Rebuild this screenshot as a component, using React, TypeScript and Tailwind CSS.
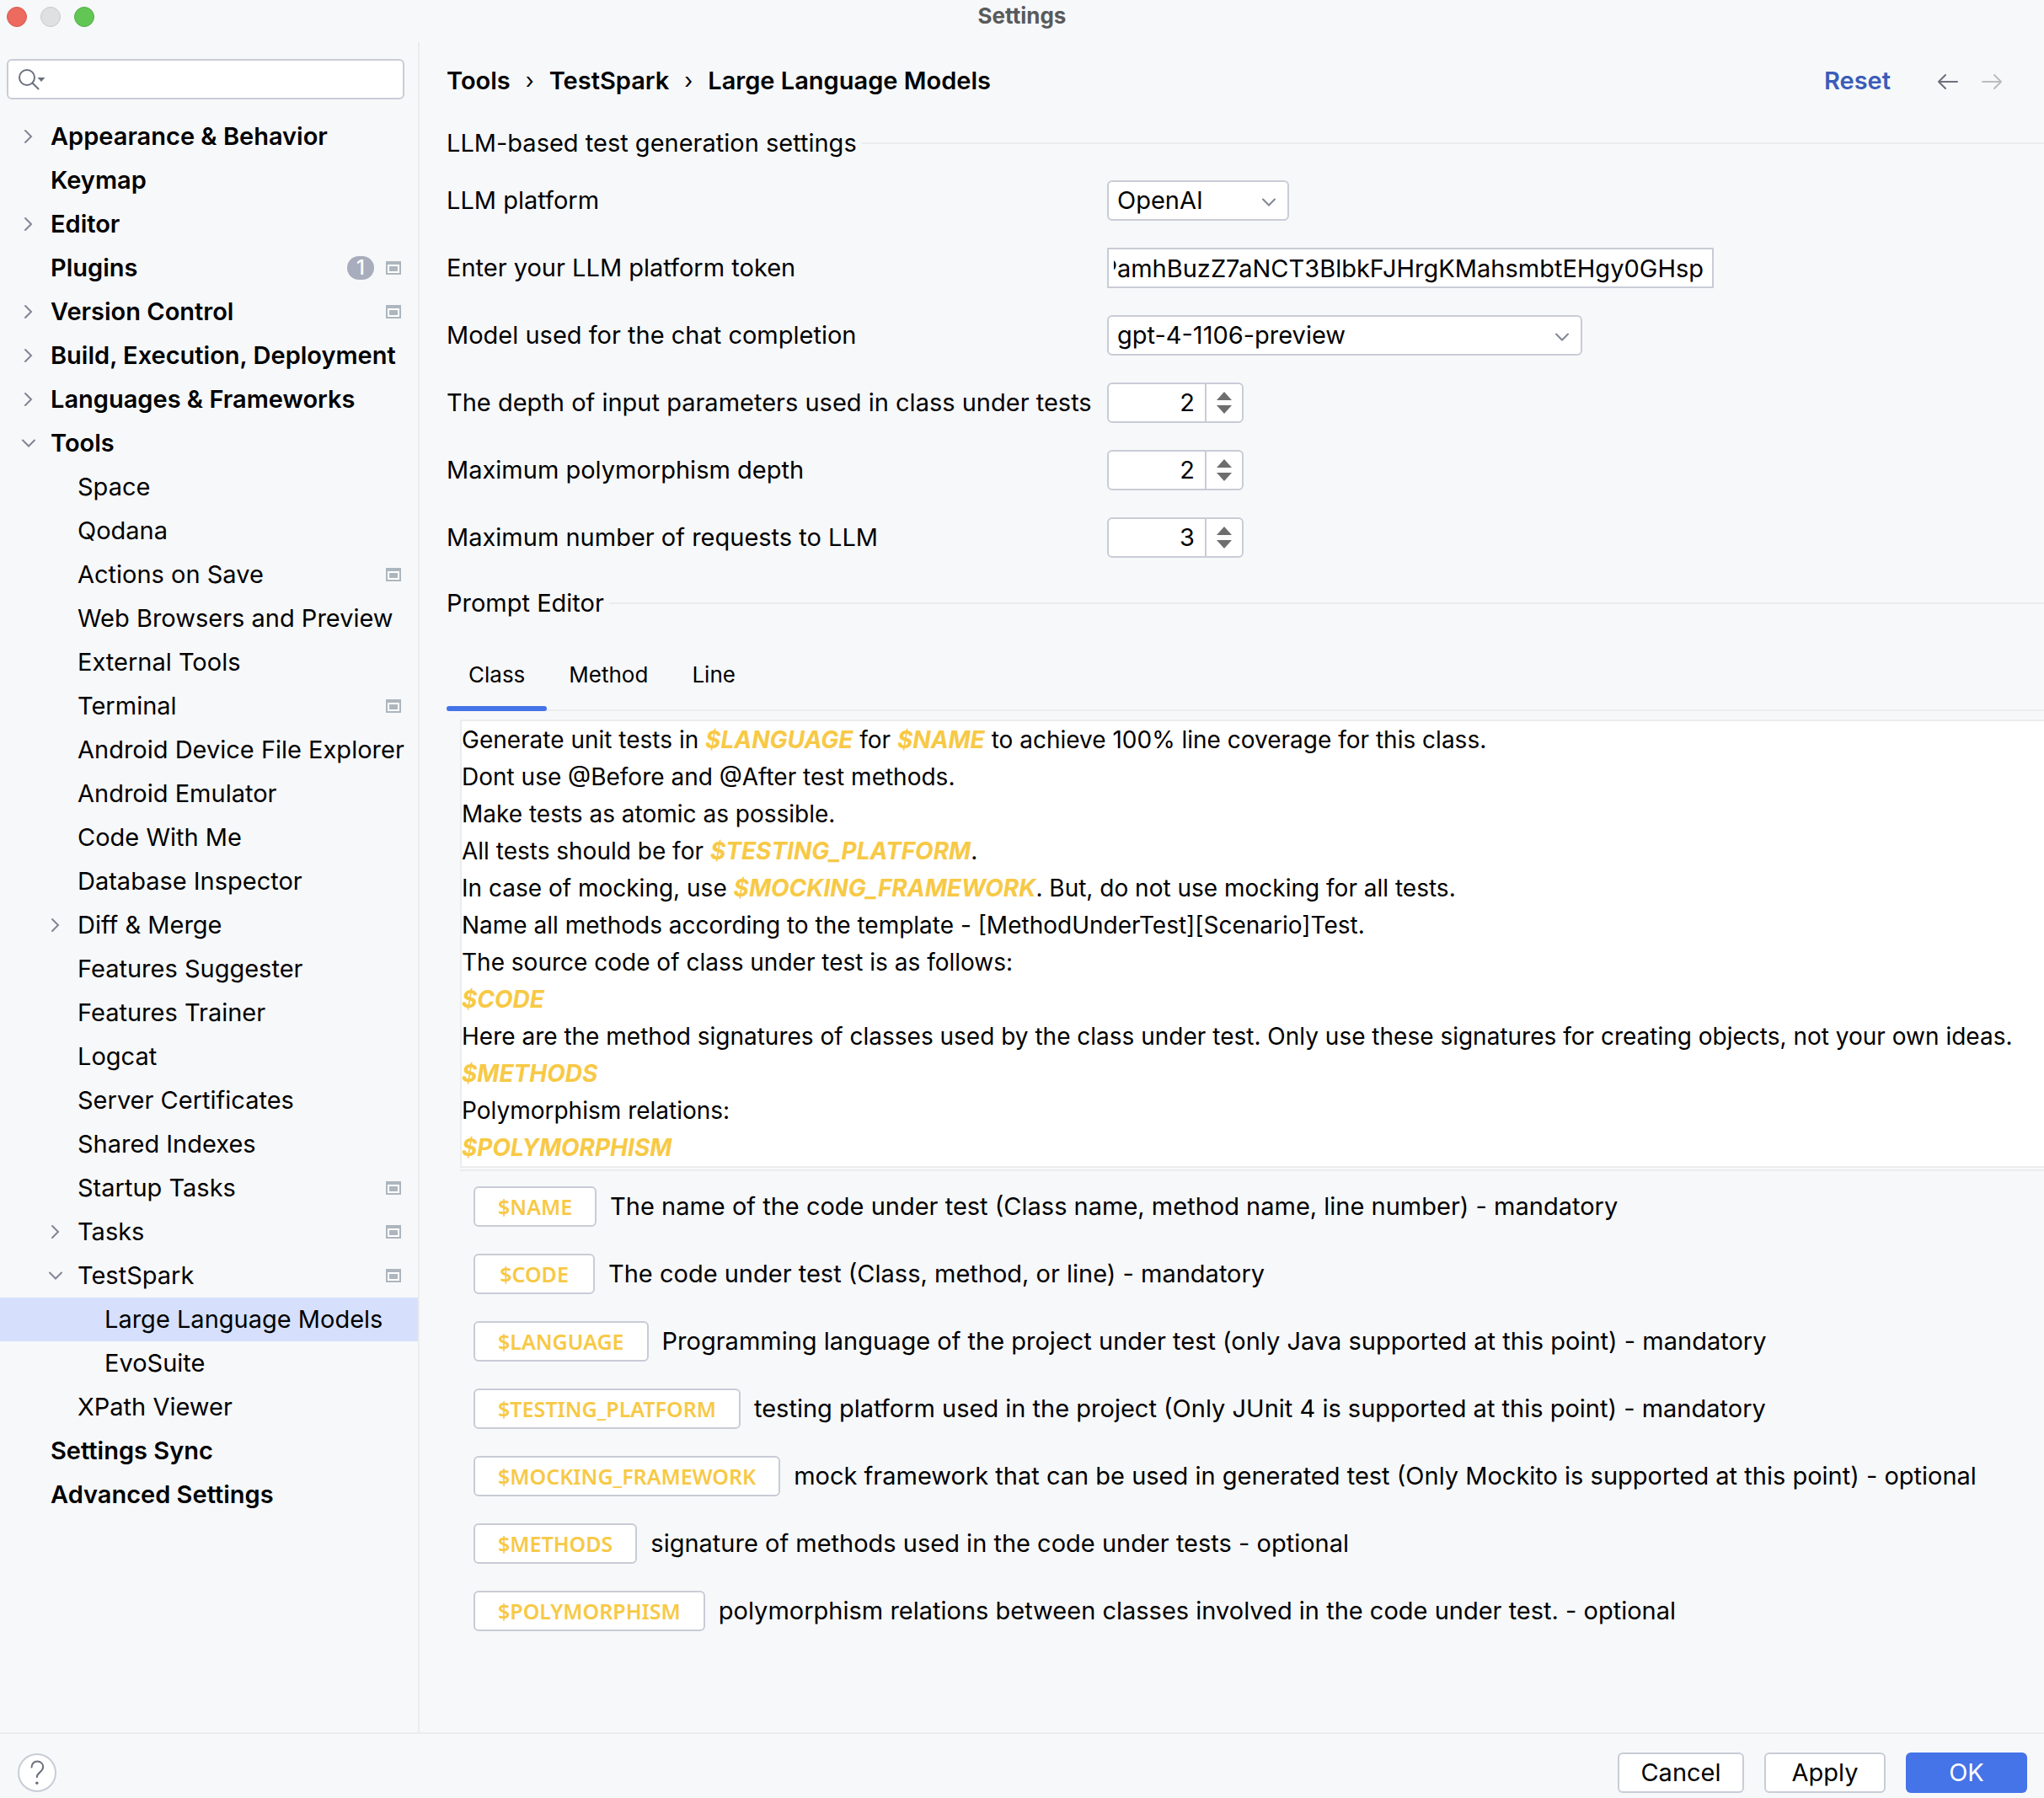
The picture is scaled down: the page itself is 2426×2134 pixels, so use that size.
import { useState } from "react";

type TreeItem = {
  label: string;
  level: 0 | 1 | 2;
  state?: "open" | "closed";
  project?: boolean;
  badge?: string;
};

const tree: TreeItem[] = [
  { label: "Appearance & Behavior", level: 0, state: "closed" },
  { label: "Keymap", level: 0 },
  { label: "Editor", level: 0, state: "closed" },
  { label: "Plugins", level: 0, project: true, badge: "1" },
  { label: "Version Control", level: 0, state: "closed", project: true },
  { label: "Build, Execution, Deployment", level: 0, state: "closed" },
  { label: "Languages & Frameworks", level: 0, state: "closed" },
  { label: "Tools", level: 0, state: "open" },
  { label: "Space", level: 1 },
  { label: "Qodana", level: 1 },
  { label: "Actions on Save", level: 1, project: true },
  { label: "Web Browsers and Preview", level: 1 },
  { label: "External Tools", level: 1 },
  { label: "Terminal", level: 1, project: true },
  { label: "Android Device File Explorer", level: 1 },
  { label: "Android Emulator", level: 1 },
  { label: "Code With Me", level: 1 },
  { label: "Database Inspector", level: 1 },
  { label: "Diff & Merge", level: 1, state: "closed" },
  { label: "Features Suggester", level: 1 },
  { label: "Features Trainer", level: 1 },
  { label: "Logcat", level: 1 },
  { label: "Server Certificates", level: 1 },
  { label: "Shared Indexes", level: 1 },
  { label: "Startup Tasks", level: 1, project: true },
  { label: "Tasks", level: 1, state: "closed", project: true },
  { label: "TestSpark", level: 1, state: "open", project: true },
  { label: "Large Language Models", level: 2 },
  { label: "EvoSuite", level: 2 },
  { label: "XPath Viewer", level: 1 },
  { label: "Settings Sync", level: 0 },
  { label: "Advanced Settings", level: 0 },
];

const levelPadding = ["pl-6", "pl-14", "pl-[88px]"];

const promptLines = [
  "Generate unit tests in $LANGUAGE for $NAME to achieve 100% line coverage for this class.",
  "Dont use @Before and @After test methods.",
  "Make tests as atomic as possible.",
  "All tests should be for $TESTING_PLATFORM.",
  "In case of mocking, use $MOCKING_FRAMEWORK. But, do not use mocking for all tests.",
  "Name all methods according to the template - [MethodUnderTest][Scenario]Test.",
  "The source code of class under test is as follows:",
  "$CODE",
  "Here are the method signatures of classes used by the class under test. Only use these signatures for creating objects, not your own ideas.",
  "$METHODS",
  "Polymorphism relations:",
  "$POLYMORPHISM",
];

const keywords = [
  ["$NAME", "The name of the code under test (Class name, method name, line number) - mandatory"],
  ["$CODE", "The code under test (Class, method, or line) - mandatory"],
  ["$LANGUAGE", "Programming language of the project under test (only Java supported at this point) - mandatory"],
  ["$TESTING_PLATFORM", "testing platform used in the project (Only JUnit 4 is supported at this point) - mandatory"],
  ["$MOCKING_FRAMEWORK", "mock framework that can be used in generated test (Only Mockito is supported at this point) - optional"],
  ["$METHODS", "signature of methods used in the code under tests - optional"],
  ["$POLYMORPHISM", "polymorphism relations between classes involved in the code under test. - optional"],
];

function Chevron({ open }: { open?: boolean }) {
  return (
    <svg className="size-5 shrink-0" viewBox="0 0 20 20" fill="none" stroke="#818594" strokeWidth="2" strokeLinecap="round" aria-hidden="true">
      <path d={open ? "M3 6.5 10 13.5 17 6.5" : "M6 3 13 10 6 17"} />
    </svg>
  );
}

function ProjectIcon() {
  return (
    <svg className="h-4 w-[18px] shrink-0" viewBox="0 0 18 16" aria-hidden="true">
      <path d="M0 0h18v16H0z" fill="#adb6be" />
      <path d="M2 4h14v10H2z" fill="#fff" />
      <path d="M4 6h10v6H4z" fill="#adb6be" />
    </svg>
  );
}

function GroupTitle({ children }: { children: string }) {
  return (
    <div className="flex items-center gap-1.5">
      <h2 className="leading-9">{children}</h2>
      <div className="h-0.5 flex-1 bg-[#ebecee]" />
    </div>
  );
}

function Dropdown({ id, value, className }: { id: string; value: string; className: string }) {
  return (
    <div className={"relative " + className}>
      <select id={id} defaultValue={value} className="h-12 w-full appearance-none rounded-md border-2 border-[#c9ccd6] bg-white px-2.5">
        <option>{value}</option>
      </select>
      <span className="pointer-events-none absolute inset-y-0 right-3.5 flex items-center pt-1">
        <Chevron open />
      </span>
    </div>
  );
}

function Spinner({ id, initial }: { id: string; initial: number }) {
  const [value, setValue] = useState(initial);
  return (
    <div className="flex h-12 w-[162px] rounded-md border-2 border-[#c9ccd6] bg-white">
      <input
        id={id}
        inputMode="numeric"
        value={value}
        onChange={(e) => setValue(Number(e.target.value) || 0)}
        className="w-0 flex-1 bg-transparent pr-3 text-right outline-none"
      />
      <div className="flex w-11 flex-col items-center justify-center gap-1.5 border-l-2 border-[#c9ccd6]">
        <button type="button" aria-label="Increase" onClick={() => setValue(value + 1)}>
          <svg className="block h-2.5 w-[18px]" viewBox="0 0 18 10" fill="#6e6e6e"><path d="M9 0 18 10H0z" /></svg>
        </button>
        <button type="button" aria-label="Decrease" onClick={() => setValue(value - 1)}>
          <svg className="block h-2.5 w-[18px]" viewBox="0 0 18 10" fill="#6e6e6e"><path d="M9 10 0 0h18z" /></svg>
        </button>
      </div>
    </div>
  );
}

function PromptLine({ text }: { text: string }) {
  return (
    <p>
      {text.split(/(\$[A-Z_]+)/).map((part, i) =>
        part.startsWith("$") ? (
          <em key={i} className="font-bold text-[#f7c946]">{part}</em>
        ) : (
          part
        ),
      )}
    </p>
  );
}

export default function App() {
  const [selected, setSelected] = useState("Large Language Models");
  const [tab, setTab] = useState("Class");

  return (
    <div className="flex min-h-screen flex-col bg-[#f7f8fa] font-['Inter',sans-serif] text-[29px] leading-9 text-black">
      <header className="grid h-10 grid-cols-[1fr_auto_1fr] items-center px-2">
        <div className="flex gap-4">
          <button type="button" aria-label="Close" className="size-6 rounded-full border border-[#d65a50] bg-[#ec6a5e]" />
          <button type="button" aria-label="Minimize" className="size-6 rounded-full border border-[#c8c9ca] bg-[#dfe0e1]" />
          <button type="button" aria-label="Zoom" className="size-6 rounded-full border border-[#55ab48] bg-[#62c655]" />
        </div>
        <h1 className="pb-0.5 text-[26px] leading-9 font-bold text-[#595a5b]">Settings</h1>
      </header>

      <div className="mt-2.5 flex flex-1">
        <aside className="w-[498px] shrink-0 border-r-2 border-[#ebecee] pt-5">
          <label className="mr-4 ml-2 flex h-12 items-center rounded-md border-2 border-[#c9ccd6] bg-white pl-3">
            <svg className="h-7 w-9 shrink-0" viewBox="0 0 36 28" fill="none" stroke="#6c707e" strokeWidth="2" strokeLinecap="round" aria-hidden="true">
              <circle cx="10" cy="12" r="9" />
              <path d="m16.5 18.5 7 7" />
              <path d="M22.500 12h9l-4.500 5z" fill="#6c707e" stroke="none" />
            </svg>
            <input type="search" aria-label="Search settings" className="w-0 flex-1 bg-transparent outline-none" />
          </label>

          <ul className="mt-[18px]">
            {tree.map((item) => (
              <li key={item.label}>
                <button
                  type="button"
                  onClick={() => setSelected(item.label)}
                  className={
                    "flex h-[52px] w-full items-center pr-5 text-left whitespace-nowrap " +
                    levelPadding[item.level] +
                    (item.level === 0 ? " font-semibold" : "") +
                    (item.label === selected ? " bg-[#d6e0fc]" : "")
                  }
                >
                  <span className="flex w-9 shrink-0">{item.state && <Chevron open={item.state === "open"} />}</span>
                  <span className="flex-1">{item.label}</span>
                  {item.badge && (
                    <span className="mr-3.5 flex h-7 w-8 items-center justify-center rounded-full bg-[#a8adbd] text-[24px] font-medium text-white">
                      {item.badge}
                    </span>
                  )}
                  {item.project && <ProjectIcon />}
                </button>
              </li>
            ))}
          </ul>
        </aside>

        <main className="min-w-0 flex-1 overflow-hidden pl-8">
          <div className="flex h-[92px] items-center pr-12">
            <nav aria-label="Breadcrumb" className="flex flex-1 items-center gap-[18px] font-semibold">
              <a href="#tools">Tools</a>
              <span className="text-[26px] font-normal">›</span>
              <a href="#testspark">TestSpark</a>
              <span className="text-[26px] font-normal">›</span>
              <a href="#llm">Large Language Models</a>
            </nav>
            <a href="#reset" className="mr-[54px] font-semibold text-[#3b5cb8]">Reset</a>
            <button type="button" aria-label="Back" className="mr-6">
              <svg className="h-5 w-7" viewBox="0 0 28 20" fill="none" stroke="#6c707e" strokeWidth="2" strokeLinecap="round" strokeLinejoin="round">
                <path d="M25 11H3M11 3 3 11l8 8" />
              </svg>
            </button>
            <button type="button" aria-label="Forward" disabled>
              <svg className="h-5 w-7" viewBox="0 0 28 20" fill="none" stroke="#bcbcbe" strokeWidth="2" strokeLinecap="round" strokeLinejoin="round">
                <path d="M3 11h22M17 3l8 8-8 8" />
              </svg>
            </button>
          </div>

          <section className="pt-2.5">
            <GroupTitle>LLM-based test generation settings</GroupTitle>
            <div className="mt-[26px] grid grid-cols-[784px_1fr] items-center gap-y-8">
              <label htmlFor="platform">LLM platform</label>
              <Dropdown id="platform" value="OpenAI" className="w-[216px]" />
              <label htmlFor="token">Enter your LLM platform token</label>
              <input
                id="token"
                defaultValue="PamhBuzZ7aNCT3BlbkFJHrgKMahsmbtEHgy0GHsp"
                className="h-12 w-[720px] border-2 border-[#c9ccd6] bg-white pr-2.5 pl-1.5 [direction:rtl]"
              />
              <label htmlFor="model">Model used for the chat completion</label>
              <Dropdown id="model" value="gpt-4-1106-preview" className="w-[564px]" />
              <label htmlFor="depth">The depth of input parameters used in class under tests</label>
              <Spinner id="depth" initial={2} />
              <label htmlFor="polymorphism">Maximum polymorphism depth</label>
              <Spinner id="polymorphism" initial={2} />
              <label htmlFor="requests">Maximum number of requests to LLM</label>
              <Spinner id="requests" initial={3} />
            </div>
          </section>

          <section className="pt-9">
            <GroupTitle>Prompt Editor</GroupTitle>
            <div role="tablist" className="mt-8 flex border-b-2 border-[#ebecee] text-[26px]">
              {["Class", "Method", "Line"].map((name) => (
                <button
                  key={name}
                  type="button"
                  role="tab"
                  aria-selected={tab === name}
                  onClick={() => setTab(name)}
                  className="relative h-[76px] px-[26px] pb-1.5"
                >
                  {name}
                  {tab === name && <span className="absolute inset-x-0 -bottom-0.5 h-1.5 rounded-full bg-[#4573e8]" />}
                </button>
              ))}
            </div>

            <div className="mt-2.5 ml-4 border-b-2 border-[#ebecee] pb-0.5">
              <div
                role="textbox"
                aria-multiline="true"
                aria-label="Prompt template"
                contentEditable
                suppressContentEditableWarning
                className="border-y-2 border-l-2 border-[#ebecee] bg-white text-[28px] leading-11 whitespace-nowrap outline-none"
              >
                {promptLines.map((line) => (
                  <PromptLine key={line} text={line} />
                ))}
              </div>
            </div>

            <ul className="mt-[18px] ml-8 flex flex-col gap-8">
              {keywords.map(([name, description]) => (
                <li key={name} className="flex items-center gap-4 whitespace-nowrap">
                  <button
                    type="button"
                    className="h-12 min-w-36 rounded-md border-2 border-[#c9ccd6] bg-white px-[27px] font-['Noto_Sans',sans-serif] text-[25px] font-semibold text-[#f7c946]"
                  >
                    {name}
                  </button>
                  <span>{description}</span>
                </li>
              ))}
            </ul>
          </section>
        </main>
      </div>

      <footer className="flex items-center gap-6 border-t-2 border-[#ebecee] px-5 pt-[22px] pb-1.5">
        <button type="button" aria-label="Help" className="mr-auto flex size-12 items-center justify-center">
          <svg className="size-12" viewBox="0 0 48 48" fill="none" strokeWidth="2" strokeLinecap="round">
            <circle cx="24" cy="24" r="22" fill="#fff" stroke="#c9ccd6" />
            <path d="M17.500 17.500c0-4 3-7 6.800-7 3.900 0 6.900 2.800 6.900 6.600 0 6.100-7.400 6.400-7.400 12.200" stroke="#6c707e" />
            <circle cx="23.800" cy="36.300" r="1.700" fill="#6c707e" />
          </svg>
        </button>
        <button type="button" className="h-12 w-[150px] rounded-md border-2 border-[#c9ccd6] bg-white">Cancel</button>
        <button type="button" className="h-12 w-36 rounded-md border-2 border-[#c9ccd6] bg-white">Apply</button>
        <button type="button" className="h-12 w-36 rounded-md bg-[#4573e8] text-white">OK</button>
      </footer>
    </div>
  );
}
